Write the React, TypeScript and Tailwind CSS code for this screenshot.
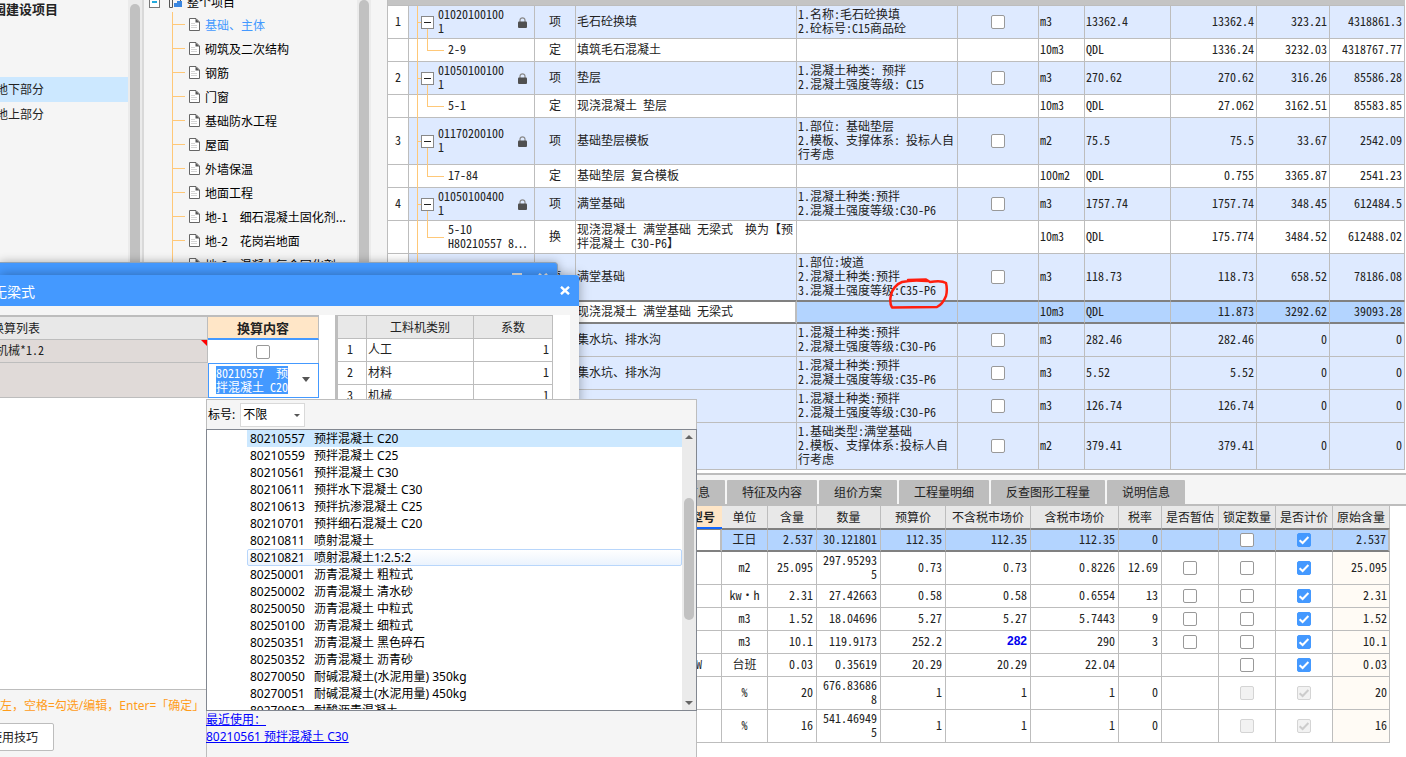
import type { ReactNode } from "react";
import clsx from "clsx";

type BillRow = {
  no?: string;
  code?: string;
  kind: "item" | "quota";
  type: string;
  name: string;
  feature?: string;
  unit: string;
  expr: string;
  qty: string;
  price: string;
  total: string;
  height: string;
  selected?: boolean;
};

const billRows: BillRow[] = [
  { no: "1", code: "010201001001", kind: "item", type: "项", name: "毛石砼换填", feature: "1.名称:毛石砼换填\n2.砼标号:C15商品砼", unit: "m3", expr: "13362.4", qty: "13362.4", price: "323.21", total: "4318861.3", height: "h-[33px]" },
  { code: "2-9", kind: "quota", type: "定", name: "填筑毛石混凝土", unit: "10m3", expr: "QDL", qty: "1336.24", price: "3232.03", total: "4318767.77", height: "h-[23px]" },
  { no: "2", code: "010501001001", kind: "item", type: "项", name: "垫层", feature: "1.混凝土种类: 预拌\n2.混凝土强度等级: C15", unit: "m3", expr: "270.62", qty: "270.62", price: "316.26", total: "85586.28", height: "h-[33px]" },
  { code: "5-1", kind: "quota", type: "定", name: "现浇混凝土 垫层", unit: "10m3", expr: "QDL", qty: "27.062", price: "3162.51", total: "85583.85", height: "h-[23px]" },
  { no: "3", code: "011702001001", kind: "item", type: "项", name: "基础垫层模板", feature: "1.部位: 基础垫层\n2.模板、支撑体系: 投标人自行考虑", unit: "m2", expr: "75.5", qty: "75.5", price: "33.67", total: "2542.09", height: "h-[47px]" },
  { code: "17-84", kind: "quota", type: "定", name: "基础垫层 复合模板", unit: "100m2", expr: "QDL", qty: "0.755", price: "3365.87", total: "2541.23", height: "h-[23px]" },
  { no: "4", code: "010501004001", kind: "item", type: "项", name: "满堂基础", feature: "1.混凝土种类:预拌\n2.混凝土强度等级:C30-P6", unit: "m3", expr: "1757.74", qty: "1757.74", price: "348.45", total: "612484.5", height: "h-[33px]" },
  { code: "5-10\nH80210557 8…", kind: "quota", type: "换", name: "现浇混凝土 满堂基础 无梁式  换为【预拌混凝土 C30-P6】", unit: "10m3", expr: "QDL", qty: "175.774", price: "3484.52", total: "612488.02", height: "h-[33px]" },
  { kind: "item", type: "项", name: "满堂基础", feature: "1.部位:坡道\n2.混凝土种类:预拌\n3.混凝土强度等级:C35-P6", unit: "m3", expr: "118.73", qty: "118.73", price: "658.52", total: "78186.08", height: "h-[47px]" },
  { kind: "quota", type: "", name: "现浇混凝土 满堂基础 无梁式", unit: "10m3", expr: "QDL", qty: "11.873", price: "3292.62", total: "39093.28", height: "h-[23px]", selected: true },
  { kind: "item", type: "", name: "集水坑、排水沟", feature: "1.混凝土种类:预拌\n2.混凝土强度等级:C30-P6", unit: "m3", expr: "282.46", qty: "282.46", price: "0", total: "0", height: "h-[33px]" },
  { kind: "item", type: "", name: "集水坑、排水沟", feature: "1.混凝土种类:预拌\n2.混凝土强度等级:C35-P6", unit: "m3", expr: "5.52", qty: "5.52", price: "0", total: "0", height: "h-[33px]" },
  { kind: "item", type: "", name: "", feature: "1.混凝土种类:预拌\n2.混凝土强度等级:C30-P6", unit: "m3", expr: "126.74", qty: "126.74", price: "0", total: "0", height: "h-[33px]" },
  { kind: "item", type: "", name: "", feature: "1.基础类型:满堂基础\n2.模板、支撑体系:投标人自行考虑", unit: "m2", expr: "379.41", qty: "379.41", price: "0", total: "0", height: "h-[47px]" },
];

const treeItems = [
  "基础、主体",
  "砌筑及二次结构",
  "钢筋",
  "门窗",
  "基础防水工程",
  "屋面",
  "外墙保温",
  "地面工程",
  "地-1　细石混凝土固化剂...",
  "地-2　花岗岩地面",
  "地-3　混凝土复合固化剂",
];

const tabs = ["换算信息", "特征及内容", "组价方案", "工程量明细", "反查图形工程量", "说明信息"];

type Tick = "on" | "off" | "none" | "locked-on" | "locked-off";

type ResourceRow = {
  spec?: string;
  cells: string[];
  ticks: [Tick, Tick, Tick];
  original: string;
  height: string;
  edited?: boolean;
};

const resourceHead = ["含量", "数量", "预算价", "不含税市场价", "含税市场价", "税率", "是否暂估", "锁定数量", "是否计价", "原始含量"];

const resourceRows: ResourceRow[] = [
  { cells: ["工日", "2.537", "30.121801", "112.35", "112.35", "112.35", "0"], ticks: ["none", "off", "on"], original: "2.537", height: "h-[23px]" },
  { cells: ["m2", "25.095", "297.952935", "0.73", "0.73", "0.8226", "12.69"], ticks: ["off", "off", "on"], original: "25.095", height: "h-[33px]" },
  { cells: ["kw·h", "2.31", "27.42663", "0.58", "0.58", "0.6554", "13"], ticks: ["off", "off", "on"], original: "2.31", height: "h-[23px]" },
  { cells: ["m3", "1.52", "18.04696", "5.27", "5.27", "5.7443", "9"], ticks: ["off", "off", "on"], original: "1.52", height: "h-[23px]" },
  { cells: ["m3", "10.1", "119.9173", "252.2", "282", "290", "3"], ticks: ["off", "off", "on"], original: "10.1", height: "h-[23px]", edited: true },
  { spec: "kW", cells: ["台班", "0.03", "0.35619", "20.29", "20.29", "22.04", ""], ticks: ["none", "off", "on"], original: "0.03", height: "h-[23px]" },
  { cells: ["%", "20", "676.836868", "1", "1", "1", "0"], ticks: ["none", "locked-off", "locked-on"], original: "20", height: "h-[33px]" },
  { cells: ["%", "16", "541.469495", "1", "1", "1", "0"], ticks: ["none", "locked-off", "locked-on"], original: "16", height: "h-[33px]" },
];

const materials = [
  ["80210557", "预拌混凝土 C20"],
  ["80210559", "预拌混凝土 C25"],
  ["80210561", "预拌混凝土 C30"],
  ["80210611", "预拌水下混凝土 C30"],
  ["80210613", "预拌抗渗混凝土 C25"],
  ["80210701", "预拌细石混凝土 C20"],
  ["80210811", "喷射混凝土"],
  ["80210821", "喷射混凝土1:2.5:2"],
  ["80250001", "沥青混凝土 粗粒式"],
  ["80250002", "沥青混凝土 清水砂"],
  ["80250050", "沥青混凝土 中粒式"],
  ["80250100", "沥青混凝土 细粒式"],
  ["80250351", "沥青混凝土 黑色碎石"],
  ["80250352", "沥青混凝土 沥青砂"],
  ["80270050", "耐碱混凝土(水泥用量) 350kg"],
  ["80270051", "耐碱混凝土(水泥用量) 450kg"],
  ["80270052", "耐酸沥青混凝土"],
];

function Checkbox({ label, checked = false, disabled = false }: { label: string; checked?: boolean; disabled?: boolean }) {
  return (
    <span className="relative mx-auto block size-[14px]">
      <input
        type="checkbox"
        aria-label={label}
        defaultChecked={checked}
        disabled={disabled}
        className="peer block size-[14px] appearance-none rounded-[2px] border border-[#999999] bg-white checked:border-[#4499ff] checked:bg-[#4499ff] disabled:border-[#d4d4d4] disabled:bg-[#f2f2f2]"
      />
      <svg
        viewBox="0 0 14 14"
        className="pointer-events-none absolute inset-0 hidden size-[14px] text-white peer-checked:block peer-disabled:text-[#cccccc]"
        fill="none"
        stroke="currentColor"
        strokeWidth="2"
      >
        <path d="M2.6 7.2 5.6 10 11.4 4" />
      </svg>
    </span>
  );
}

function DocIcon() {
  return (
    <svg viewBox="0 0 11 13" className="h-[13px] w-[11px] shrink-0" fill="none">
      <path d="M.5.5H7L10.5 4v8.5H.5z" fill="#fff" stroke="#666" />
      <path d="M6.5.5 10.5 4.5H6.5z" fill="#555" />
      <path d="M2 5.5h4M2 7.5h6M2 9.5h6" stroke="#d5d5d5" />
    </svg>
  );
}

function LockIcon() {
  return (
    <svg viewBox="0 0 9 11" className="h-[11px] w-[9px] shrink-0">
      <path d="M2 5V3.2C2 1.6 3 .8 4.5.8S7 1.6 7 3.2V5" fill="none" stroke="#8a8a8a" strokeWidth="1.2" />
      <rect y="4.5" width="9" height="6.5" rx="1" fill="#505050" />
    </svg>
  );
}

function CloseIcon() {
  return (
    <svg viewBox="0 0 10 9" className="h-[9px] w-[10px]" stroke="currentColor" strokeWidth="2.4">
      <path d="M1 .8 9 8.2M9 .8 1 8.2" />
    </svg>
  );
}

function ProjectPanel() {
  return (
    <aside className="flex w-[144px] shrink-0 border-r-2 border-[#d9d9d9] bg-[#f5f5f5] text-[#222222]">
      <div className="min-w-0 flex-1 overflow-hidden whitespace-nowrap">
        <h1 className="-ml-[7px] h-[77px] text-[13px] leading-[18px] font-bold">园建设项目</h1>
        <ul className="leading-[23px]">
          <li className="h-[25px] bg-[#cce8ff]">
            <span className="-ml-1">地下部分</span>
          </li>
          <li className="h-[25px]">
            <span className="-ml-1">地上部分</span>
          </li>
        </ul>
      </div>
      <div className="w-[14px] bg-[#ebebeb] px-[2px] pt-1">
        <div className="h-full rounded-t-full bg-[#c1c1c1]" />
      </div>
    </aside>
  );
}

function TreePanel() {
  return (
    <nav className="flex w-[243px] shrink-0 bg-[#f5f5f5] text-black">
      <div className="min-w-0 flex-1 overflow-hidden whitespace-nowrap">
        <div className="-mt-2 flex h-5 items-center pl-[5px]">
          <span className="flex size-[11px] items-center justify-center border border-[#777777] bg-white">
            <span className="h-[2px] w-[5px] bg-[#22aadd]" />
          </span>
          <svg viewBox="0 0 13 13" className="mr-[5px] ml-[9px] size-[13px]" fill="none">
            <path d="M.5 0v11.500h3M3.500 11.500V2.500h8v3" stroke="#555" />
            <path d="M5 11V7h3V5h5v6z" fill="#3a86e0" />
          </svg>
          <span>整个项目</span>
        </div>
        <ul className="ml-7 border-l border-[#ffc878]">
          {treeItems.map((item, i) => (
            <li key={item} className="flex h-6 items-center">
              <span className="h-px w-3 bg-[#ffc878]" />
              <span className="ml-1">
                <DocIcon />
              </span>
              <a href="#section" className={clsx("ml-[5px] pt-[2px]", i === 0 && "text-[#4499ff]")}>
                {item}
              </a>
            </li>
          ))}
        </ul>
      </div>
      <div className="mr-4 w-[14px] bg-[#ebebeb] px-[2px]">
        <div className="h-full rounded-t-full bg-[#c1c1c1]" />
      </div>
    </nav>
  );
}

function CodeCell({ row }: { row: BillRow }) {
  const isItem = row.kind === "item";
  return (
    <>
      <span className="absolute top-0 -bottom-px left-2 w-px bg-[#ffc878]" />
      {row.code && isItem && (
        <>
          <span className="absolute top-1/2 left-2 h-px w-1 bg-[#ffc878]" />
          <span className="absolute top-1/2 -bottom-px left-[18px] w-px bg-[#ffc878]" />
          <div className="relative flex items-center pr-[7px] pl-3">
            <button
              type="button"
              aria-label="折叠"
              className="flex size-[13px] shrink-0 items-center justify-center border border-[#888888] bg-white"
            >
              <span className="h-px w-[7px] bg-[#222222]" />
            </button>
            <span className="ml-1 w-[70px] pb-[2px] break-all">{row.code}</span>
            <span className="ml-auto">
              <LockIcon />
            </span>
          </div>
        </>
      )}
      {row.code && !isItem && (
        <>
          <span className="absolute top-0 bottom-1/2 left-[18px] w-px bg-[#ffc878]" />
          <span className="absolute top-1/2 left-[18px] h-px w-[17px] bg-[#ffc878]" />
          <div className="pb-[2px] pl-[39px] whitespace-pre">{row.code}</div>
        </>
      )}
    </>
  );
}

function BillTable() {
  return (
    <div className="border-l border-[#bdbdbd] bg-white pr-px pb-[3px]">
      <div className="h-[6px] border-b border-[#bdbdbd] bg-[#c4c4c4]" />
      <table className="w-full table-fixed border-separate border-spacing-0 leading-[14px]">
        <colgroup>
          <col className="w-[21px]" />
          <col className="w-[126px]" />
          <col className="w-[41px]" />
          <col />
          <col className="w-[161px]" />
          <col className="w-[81px]" />
          <col className="w-[46px]" />
          <col className="w-[86px]" />
          <col className="w-[86px]" />
          <col className="w-[73px]" />
          <col className="w-[75px]" />
        </colgroup>
        <tbody>
          {billRows.map((row, i) => {
            const beforeSelected = billRows[i + 1]?.selected;
            const cell = clsx(
              "border-r border-r-[#bdbdbd] p-0",
              row.selected
                ? "border-t border-b-2 border-t-[#808080] border-b-[#808080]"
                : beforeSelected
                  ? "border-b border-b-[#808080]"
                  : "border-b border-b-[#bdbdbd]",
            );
            const text = clsx(cell, "pb-[2px]");
            return (
              <tr
                key={i}
                className={clsx(
                  row.height,
                  row.selected ? "bg-[#b3d4ff]" : row.kind === "item" ? "bg-[#deeaff]" : "bg-white",
                )}
              >
                <td className={clsx(text, "bg-white text-center")}>{row.no}</td>
                <td className={clsx(cell, "relative")}>
                  <CodeCell row={row} />
                </td>
                <td className={clsx(text, "text-center")}>{row.type}</td>
                <td className={clsx(text, "pl-px whitespace-pre-wrap", row.selected && "border-r-2 border-r-[#808080] bg-white")}>
                  {row.name}
                </td>
                <td className={clsx(text, "pl-px whitespace-pre-line")}>{row.feature}</td>
                <td className={cell}>{row.kind === "item" && <Checkbox label="主要清单" />}</td>
                <td className={clsx(text, "pl-px")}>{row.unit}</td>
                <td className={clsx(text, "pl-px")}>{row.expr}</td>
                <td className={clsx(text, "pr-[2px] text-right")}>{row.qty}</td>
                <td className={clsx(text, "pr-[2px] text-right")}>{row.price}</td>
                <td className={clsx(text, "pr-[2px] text-right")}>{row.total}</td>
              </tr>
            );
          })}
        </tbody>
      </table>
    </div>
  );
}

function TickCell({ tick, label }: { tick: Tick; label: string }) {
  if (tick === "none") return null;
  return <Checkbox label={label} checked={tick.endsWith("on")} disabled={tick.startsWith("locked")} />;
}

function ResourcePane() {
  return (
    <section className="min-h-0 flex-1 bg-white">
      <div className="flex gap-[2px] border-t-2 border-b-2 border-[#bdbdbd] bg-[#f5f5f5] pt-[5px] pl-[260px]">
        {tabs.map((tab) => (
          <button key={tab} type="button" className="h-6 shrink-0 rounded-t-[1px] bg-[#bdbdbd] px-[15px]">
            {tab}
          </button>
        ))}
      </div>
      <div className="pr-4">
        <table className="w-full table-fixed border-separate border-spacing-0 leading-[14px]">
          <colgroup>
            <col />
            <col className="w-[74px]" />
            <col className="w-[46px]" />
            <col className="w-[49px]" />
            <col className="w-[64px]" />
            <col className="w-[65px]" />
            <col className="w-[85px]" />
            <col className="w-[88px]" />
            <col className="w-[43px]" />
            <col className="w-[57px]" />
            <col className="w-[57px]" />
            <col className="w-[57px]" />
            <col className="w-[57px]" />
          </colgroup>
          <thead>
            <tr className="h-[23px] bg-[#e8e8e8]">
              <td className="border-b border-[#808080]" />
              <th className="border-b-2 border-[#1166ff] bg-[#ffe6c7] p-0 font-bold">规格及型号</th>
              <th className="border-r border-b border-r-[#bdbdbd] border-b-[#808080] p-0 font-normal">单位</th>
              {resourceHead.map((head) => (
                <th key={head} className="border-r border-b border-r-[#bdbdbd] border-b-[#808080] p-0 font-normal">
                  {head}
                </th>
              ))}
            </tr>
          </thead>
          <tbody>
            {resourceRows.map((row, i) => {
              const first = i === 0;
              const cell = clsx(
                "border-r border-r-[#bdbdbd] p-0",
                first ? "border-t border-b-2 border-t-[#808080] border-b-[#808080]" : "border-b border-b-[#bdbdbd]",
              );
              const text = clsx(cell, "pb-[2px]");
              return (
                <tr key={i} className={clsx(row.height, first ? "bg-[#b3d4ff]" : "bg-white")}>
                  <td className={cell} />
                  <td className={clsx(text, "pr-[19px] text-right", first && "border-r-2 border-r-[#808080] bg-white")}>
                    {row.spec}
                  </td>
                  {row.cells.map((value, j) => (
                    <td
                      key={j}
                      className={clsx(
                        text,
                        j === 0 ? "text-center" : "pr-[3px] text-right break-all",
                        j === 2 && "pl-[2px]",
                        j === 4 && row.edited && "font-['Liberation_Sans',sans-serif] font-bold text-[#0000ee]",
                      )}
                    >
                      {value}
                    </td>
                  ))}
                  {row.ticks.map((tick, j) => (
                    <td key={j} className={cell}>
                      <TickCell tick={tick} label={resourceHead[j + 6]} />
                    </td>
                  ))}
                  <td
                    className={clsx(
                      text,
                      "pr-[2px] text-right",
                      first ? "border-r-2 border-r-[#808080]" : "bg-[#fffbf5]",
                    )}
                  >
                    {row.original}
                  </td>
                </tr>
              );
            })}
          </tbody>
        </table>
      </div>
    </section>
  );
}

function GridTh({ children }: { children?: ReactNode }) {
  return <th className="border-r border-b border-[#bdbdbd] bg-[#e8e8e8] p-0 font-normal">{children}</th>;
}

function ConversionDialog() {
  return (
    <div
      role="dialog"
      aria-label="标准换算"
      className="absolute top-[275px] bottom-0 left-0 flex w-[579px] flex-col rounded-tr-[3px] bg-[#f5f5f5] shadow-[0_0_12px_rgba(0,0,0,0.35)]"
    >
      <header className="flex h-[31px] shrink-0 items-center justify-between overflow-hidden rounded-tr-[3px] bg-[#4499ff] pr-[9px] text-white">
        <h2 className="-ml-[7px] text-sm">无梁式</h2>
        <button type="button" aria-label="关闭">
          <CloseIcon />
        </button>
      </header>
      <div className="flex min-h-0 flex-1 overflow-hidden pt-[9px] pr-[9px]">
        <div className="flex w-[335px] flex-col bg-white">
          <table className="w-[319px] table-fixed border-separate border-spacing-0 border-t-2 border-[#bdbdbd] leading-[14px]">
            <colgroup>
              <col />
              <col className="w-[111px]" />
            </colgroup>
            <thead>
              <tr className="h-[23px]">
                <th className="border-r border-b border-[#bdbdbd] bg-[#e8e8e8] p-0 text-left -indent-2 font-normal">换算列表</th>
                <th className="border-r border-b-2 border-r-[#bdbdbd] border-b-[#4499ff] bg-[#ffe6c7] p-0 text-[13px] font-bold">换算内容</th>
              </tr>
            </thead>
            <tbody>
              <tr className="h-[23px]">
                <td className="relative border-r border-b border-[#bdbdbd] bg-[#e0dad8] p-0 pb-[2px] -indent-1">
                  机械*1.2
                  <svg viewBox="0 0 6 6" className="absolute top-0 right-0 size-[6px]">
                    <path d="M0 0h6v6z" fill="#f00" />
                  </svg>
                </td>
                <td className="border-r border-[#bdbdbd] p-0">
                  <Checkbox label="机械*1.2" />
                </td>
              </tr>
              <tr className="h-[35px]">
                <td className="border-b border-[#bdbdbd] bg-[#e0dad8] p-0" />
                <td className="border border-[#4499ff] p-0 pb-[2px]">
                  <button
                    type="button"
                    aria-haspopup="listbox"
                    className="flex w-full items-center justify-between pr-2 pl-[7px] text-left text-white"
                  >
                    <span className="w-[72px] bg-[#4499ff] whitespace-pre">{"80210557  预\n拌混凝土 C20"}</span>
                    <svg viewBox="0 0 8 5" className="h-[5px] w-2">
                      <path d="M0 0h8L4 5z" fill="#555" />
                    </svg>
                  </button>
                </td>
              </tr>
            </tbody>
          </table>
        </div>
        <div className="w-[3px] bg-[#bdbdbd]" />
        <div className="flex-1 bg-white">
          <table className="w-[215px] table-fixed border-separate border-spacing-0 border-t border-[#bdbdbd] leading-[14px]">
            <colgroup>
              <col className="w-[29px]" />
              <col />
              <col className="w-[79px]" />
            </colgroup>
            <thead>
              <tr className="h-[23px]">
                <GridTh />
                <GridTh>工料机类别</GridTh>
                <GridTh>系数</GridTh>
              </tr>
            </thead>
            <tbody>
              {["人工", "材料", "机械"].map((name, i) => (
                <tr key={name} className="h-[23px]">
                  <td className="border-r border-b border-[#bdbdbd] p-0 pr-1 pb-[2px] text-center">{i + 1}</td>
                  <td className="border-r border-b border-[#bdbdbd] p-0 pb-[2px] pl-px">{name}</td>
                  <td className="border-r border-b border-[#bdbdbd] p-0 pr-[3px] pb-[2px] text-right">1</td>
                </tr>
              ))}
            </tbody>
          </table>
        </div>
      </div>
      <footer className="h-[68px] shrink-0 overflow-hidden border-t border-[#bdbdbd]">
        <p className="h-[33px] font-['Noto_Sans','Noto_Sans_CJK_SC',sans-serif] leading-[31px] whitespace-nowrap text-[#ff9c1a]">
          左，空格=勾选/编辑，Enter=「确定」
        </p>
        <button
          type="button"
          className="-ml-7 h-7 w-[82px] rounded-[2px] border border-[#bdbdbd] bg-white pr-[15px] text-right text-[#222222]"
        >
          使用技巧
        </button>
      </footer>
    </div>
  );
}

function MaterialPopup() {
  return (
    <div className="absolute top-[399px] bottom-0 left-[206px] w-[491px] border border-b-0 border-[#bdbdbd] bg-[#f5f5f5] font-['Noto_Sans','Noto_Sans_CJK_SC',sans-serif] text-black">
      <div className="flex h-[29px] items-center gap-[5px] pl-px">
        <label htmlFor="grade">标号:</label>
        <span className="relative">
          <select
            id="grade"
            className="block h-6 w-[65px] appearance-none border border-[#d9d9d9] bg-white pl-[2px]"
            defaultValue="不限"
          >
            <option>不限</option>
          </select>
          <svg viewBox="0 0 6 3" className="pointer-events-none absolute top-[11px] right-[5px] h-[3px] w-[6px]">
            <path d="M0 0h6L3 3z" fill="#555" />
          </svg>
        </span>
      </div>
      <div className="-mx-px flex h-[282px] border border-[#828790] bg-white">
        <ul role="listbox" aria-label="材料" className="ml-10 min-w-0 flex-1 overflow-hidden">
          {materials.map(([code, name], i) => (
            <li
              key={code}
              role="option"
              aria-selected={i === 0}
              className={clsx(
                "flex h-[17px] gap-[9px] border px-[2px] leading-[15px] whitespace-pre",
                i === 0 && "border-[#cce8ff] bg-[#cce8ff]",
                i === 7 && "rounded-[2px] border-[#b8d6fb] bg-linear-to-b from-white to-[#ebf3fd]",
                i !== 0 && i !== 7 && "border-transparent",
              )}
            >
              <span>{code}</span>
              <span>{name}</span>
            </li>
          ))}
        </ul>
        <div className="flex w-[14px] flex-col items-center bg-[#ebebeb] py-[5px]">
          <svg viewBox="0 0 8 4" className="h-1 w-2 shrink-0">
            <path d="M0 4h8L4 0z" fill="#666" />
          </svg>
          <div className="mt-[59px] h-[122px] w-[10px] rounded-full bg-[#c1c1c1]" />
          <svg viewBox="0 0 8 4" className="mt-auto h-1 w-2 shrink-0">
            <path d="M0 0h8L4 4z" fill="#666" />
          </svg>
        </div>
      </div>
      <div className="-ml-px flex flex-col items-start leading-[17px] text-[#0000ff] underline">
        <a href="#recent">最近使用：</a>
        <a href="#80210561">80210561 预拌混凝土 C30</a>
      </div>
    </div>
  );
}

export default function App() {
  return (
    <div className="relative flex h-screen overflow-hidden bg-white font-['Noto_Sans_CJK_SC',sans-serif] text-xs text-[#222222]">
      <ProjectPanel />
      <TreePanel />
      <main className="flex min-w-0 flex-1 flex-col font-['Noto_Sans_Mono_CJK_SC','Noto_Sans_CJK_SC',monospace]">
        <BillTable />
        <ResourcePane />
      </main>

      {/* hand-drawn mark around the concrete grade */}
      <svg viewBox="0 0 62 34" className="absolute top-[277px] left-[888px] h-[34px] w-[62px]" fill="none">
        <path
          d="M20 3 38 2.500 42 5C48 4 55 4 58 6c1 4 1 9 0 13-2 5-5 9-9 11L4 30.500C2 27 2 22 3 18 4 13 8 7 14 5c8-2 16-2 25-1"
          stroke="#ff1e0f"
          strokeWidth="2.5"
          strokeLinecap="round"
          strokeLinejoin="round"
        />
      </svg>

      <div className="absolute top-[262px] left-0 flex h-8 w-[558px] justify-end gap-4 rounded-tr-[4px] border-t border-r border-[#8fa3b8] bg-[#4499ff] pt-[10px] pr-[9px] text-[#e6e6e6] shadow-[0_0_10px_rgba(0,0,0,0.3)]">
        <button type="button" aria-label="最小化" className="h-[3px] w-[10px] bg-[#e6e6e6]" />
        <button type="button" aria-label="关闭窗口" className="h-[9px]">
          <CloseIcon />
        </button>
      </div>
      <div className="font-['Noto_Sans_Mono_CJK_SC','Noto_Sans_CJK_SC',monospace]">
        <ConversionDialog />
      </div>
      <MaterialPopup />
    </div>
  );
}
